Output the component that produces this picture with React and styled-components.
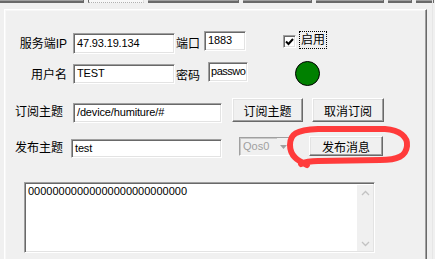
import React from "react";
import styled, { createGlobalStyle } from "styled-components";

const Global = createGlobalStyle`
  html, body { margin: 0; padding: 0; background: #f0f0f0; }
  body { font-family: "Liberation Sans", "Noto Sans CJK SC", sans-serif; font-size: 12px; color: #000; }
`;

const Window = styled.div`
  position: relative;
  width: 435px;
  height: 259px;
  overflow: hidden;
  background: #f0f0f0;
`;

const TabStrip = styled.div`
  display: flex;
  gap: 4px;
  height: 3px;
`;

const TabStub = styled.div`
  width: ${(p) => p.$w}px;
  height: 3px;
  box-sizing: border-box;
  background: ${(p) => (p.$active ? "#f7f7f7" : "#e3e3e3")};
  border-bottom: ${(p) => (p.$active ? "1px dotted #b0b0b0" : "2px solid #696969")};
  border-right: 1px solid ${(p) => (p.$active ? "#e0e0e0" : "#696969")};
  border-left: ${(p) => (p.$active ? "1px solid #696969" : "0")};
  box-shadow: ${(p) => (p.$active ? "none" : "inset 0 -1px #a0a0a0")};
`;

const EdgeLine = styled.div`
  position: absolute;
  top: 0;
  right: 2px;
  width: 1px;
  height: 100%;
  background: #e6e6e6;
`;

const Panel = styled.div`
  margin: 6px 0 0 4px;
  width: 423px;
  height: 260px;
  box-sizing: border-box;
  border-top: 1px solid #ffffff;
  border-left: 1px solid #ffffff;
  border-right: 1px solid #696969;
  box-shadow: inset -1px 0 #a0a0a0, inset 1px 1px #f7f7f7;
  display: grid;
  grid-template-rows: 30px 37px 37px 47px auto;
  padding-top: 21px;
`;

const Row = styled.div`
  display: flex;
  align-items: flex-start;
`;

const Label = styled.div`
  box-sizing: border-box;
  width: ${(p) => (p.$w ? `${p.$w}px` : "auto")};
  padding-left: ${(p) => p.$pl || 0}px;
  margin-left: ${(p) => p.$ml || 0}px;
  margin-top: ${(p) => p.$mt || 0}px;
  text-align: ${(p) => p.$align || "left"};
  font-size: 12px;
  line-height: 16px;
  white-space: nowrap;
`;

const Field = styled.div`
  box-sizing: border-box;
  width: ${(p) => p.$w}px;
  height: ${(p) => p.$h}px;
  margin-left: ${(p) => p.$ml || 0}px;
  margin-top: ${(p) => p.$mt || 0}px;
  background: #fff;
  border-top: 1px solid #a0a0a0;
  border-left: 1px solid #a0a0a0;
  border-bottom: 1px solid #ffffff;
  border-right: 1px solid #ffffff;
  box-shadow: inset 1px 1px #696969, inset -1px -1px #e3e3e3;
  padding: 0 0 0 ${(p) => p.$pad ?? 3}px;
  font-size: 11px;
  letter-spacing: ${(p) => p.$ls ?? -0.15}px;
  line-height: ${(p) => p.$h - 3}px;
  overflow: hidden;
  white-space: nowrap;
`;

const Button = styled.div`
  box-sizing: border-box;
  width: ${(p) => p.$w}px;
  height: ${(p) => p.$h}px;
  margin-left: ${(p) => p.$ml || 0}px;
  margin-top: ${(p) => p.$mt || 0}px;
  background: #f0f0f0;
  border-top: 1px solid #ffffff;
  border-left: 1px solid #ffffff;
  border-right: 1px solid #696969;
  border-bottom: 1px solid #696969;
  box-shadow: inset -1px -1px #a0a0a0, inset 1px 1px #e3e3e3;
  display: flex;
  align-items: center;
  justify-content: center;
  font-size: 12px;
`;

const CheckBox = styled.div`
  box-sizing: border-box;
  width: 13px;
  height: 13px;
  margin-left: ${(p) => p.$ml}px;
  margin-top: ${(p) => p.$mt}px;
  background: #fff;
  border-top: 1px solid #a0a0a0;
  border-left: 1px solid #a0a0a0;
  border-bottom: 1px solid #fff;
  border-right: 1px solid #fff;
  box-shadow: inset 1px 1px #696969, inset -1px -1px #e3e3e3;
  display: flex;
  align-items: center;
  justify-content: center;
`;

const FocusLabel = styled(Label)`
  outline: 1px dotted #000;
  outline-offset: 0;
  padding: 0 1px;
`;

const Lamp = styled.div`
  box-sizing: border-box;
  width: 25px;
  height: 25px;
  margin-left: ${(p) => p.$ml}px;
  border-radius: 50%;
  background: #008000;
  border: 1px solid #000;
`;

const Combo = styled.div`
  box-sizing: border-box;
  width: ${(p) => p.$w}px;
  height: ${(p) => p.$h}px;
  margin-left: ${(p) => p.$ml}px;
  margin-top: ${(p) => p.$mt}px;
  background: #f0f0f0;
  border-top: 1px solid #a0a0a0;
  border-left: 1px solid #a0a0a0;
  border-bottom: 1px solid #fff;
  border-right: 1px solid #fff;
  box-shadow: inset 1px 1px #c8c8c8;
  display: flex;
  font-size: 11px;
  color: #a0a0a0;
`;

const ComboText = styled.div`
  flex: 1;
  padding-left: 3px;
  line-height: 16px;
`;

const ComboArrow = styled.div`
  width: 13px;
  display: flex;
  align-items: center;
  justify-content: center;
  background: #f0f0f0;
`;

const Memo = styled.div`
  box-sizing: border-box;
  width: 351px;
  height: 71px;
  margin-left: 19px;
  background: #fff;
  border-top: 1px solid #a0a0a0;
  border-left: 1px solid #a0a0a0;
  border-bottom: 1px solid #fff;
  border-right: 1px solid #fff;
  box-shadow: inset 1px 1px #696969, inset -1px -1px #e3e3e3;
  display: flex;
`;

const MemoText = styled.div`
  flex: 1;
  padding: 2px 0 0 3px;
  font-size: 11px;
  line-height: 13px;
`;

const ScrollBar = styled.div`
  width: 16px;
  margin: 2px 1px 1px 0;
  background: #f0f0f0;
  display: flex;
  flex-direction: column;
  justify-content: space-between;
  align-items: center;
  padding: 5px 0 4px;
  box-sizing: border-box;
`;

const Scribble = styled.svg`
  position: absolute;
  left: 280px;
  top: 120px;
  pointer-events: none;
`;

const Chevron = ({ up }) => (
  <svg width="9" height="6" viewBox="0 0 9 6">
    <path
      d={up ? "M1 5 L4.5 1.5 L8 5" : "M1 1 L4.5 4.5 L8 1"}
      fill="none"
      stroke="#c2c2c2"
      strokeWidth="1.3"
    />
  </svg>
);

export default function App() {
  const tabs = [
    { w: 84 },
    { w: 56, active: true },
    { w: 91 },
    { w: 69 },
    { w: 68 },
    { w: 24 },
    { w: 18 },
  ];
  return (
    <Window>
      <Global />
      <TabStrip>
        {tabs.map((t, i) => (
          <TabStub key={i} $w={t.w} $active={t.active} />
        ))}
      </TabStrip>
      <EdgeLine />
      <Panel>
        <Row>
          <Label $w={62} $align="right" $mt={5}>服务端IP</Label>
          <Field $w={102} $h={21} $ml={6} $mt={2}>47.93.19.134</Field>
          <Label $ml={1} $mt={5}>端口</Label>
          <Field $w={42} $h={20} $ml={4}>1883</Field>
          <CheckBox $ml={37} $mt={4}>
            <svg width="9" height="8" viewBox="0 0 9 8">
              <path d="M1 3.5 L3.5 6 L8 1" fill="none" stroke="#000" strokeWidth="2" />
            </svg>
          </CheckBox>
          <FocusLabel $ml={4} $mt={1}>启用</FocusLabel>
        </Row>
        <Row>
          <Label $w={62} $align="right" $mt={6}>用户名</Label>
          <Field $w={102} $h={20} $ml={6} $mt={3}>TEST</Field>
          <Label $ml={1} $mt={7}>密码</Label>
          <Field $w={40} $h={20} $ml={8} $mt={1} $pad={2} $ls={-0.5}>passwo</Field>
          <Lamp $ml={47} />
        </Row>
        <Row>
          <Label $w={58} $pl={10} $mt={6}>订阅主题</Label>
          <Field $w={149} $h={20} $ml={10} $mt={5}>/device/humiture/#</Field>
          <Button $w={71} $h={24} $ml={10}>订阅主题</Button>
          <Button $w={72} $h={24} $ml={9}>取消订阅</Button>
        </Row>
        <Row>
          <Label $w={58} $pl={10} $mt={5}>发布主题</Label>
          <Field $w={151} $h={19} $ml={8} $mt={4}>test</Field>
          <Combo $w={52} $h={19} $ml={17} $mt={2}>
            <ComboText>Qos0</ComboText>
            <ComboArrow>
              <svg width="7" height="4" viewBox="0 0 7 4">
                <path d="M0 0 L7 0 L3.5 4 Z" fill="#a0a0a0" />
              </svg>
            </ComboArrow>
          </Combo>
          <Button $w={74} $h={20} $ml={18} $mt={1}>发布消息</Button>
        </Row>
        <Row>
          <Memo>
            <MemoText>00000000000000000000000000</MemoText>
            <ScrollBar>
              <Chevron up />
              <Chevron />
            </ScrollBar>
          </Memo>
        </Row>
      </Panel>
      <Scribble width="140" height="52" viewBox="280 120 140 52">
        <path
          d="M307 165 C 299 161, 290 157, 290 145 C 290 134, 296 130, 318 129 L 385 129 C 400 130, 408 137, 407 146 C 406 156, 398 160, 380 160 L 318 161 C 310 161, 305 162, 301 164"
          fill="none"
          stroke="#ff3b3b"
          strokeWidth="6"
          strokeLinecap="round"
          strokeLinejoin="round"
        />
      </Scribble>
    </Window>
  );
}
